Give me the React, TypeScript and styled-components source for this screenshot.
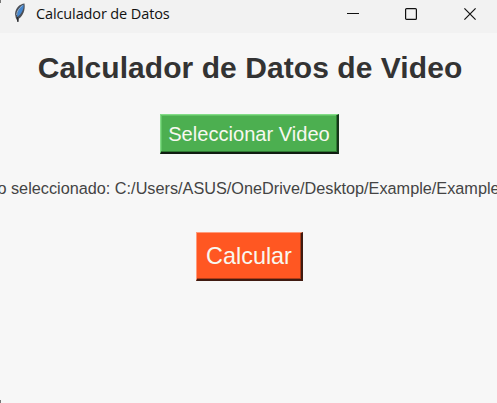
import React from "react";
import styled, { createGlobalStyle } from "styled-components";

const GlobalStyle = createGlobalStyle`
  body { margin: 0; background: #f7f7f7; overflow: hidden; }
`;

const Window = styled.div`
  position: relative;
  display: flex;
  flex-direction: column;
  height: 403px;
  background: #f7f7f7;
  font-family: "Liberation Sans", Arial, sans-serif;
`;

const WindowCorner = styled.i<{ $edge: "top" | "bottom" }>`
  position: absolute;
  left: 0;
  ${({ $edge }) => $edge}: 0;
  width: 1px;
  height: 3px;
  background: #777;
`;

const TitleBar = styled.header`
  display: flex;
  align-items: flex-start;
  height: 33px;
  flex: none;
  box-sizing: border-box;
  padding-left: 13px;
  background: #f2f2f2;
`;

const Feather = styled.svg`
  width: 13px;
  height: 20px;
  margin-top: 3px;
  flex: none;
`;

const Caption = styled.span`
  margin-left: 10px;
  font: 14.5px/28px "Open Sans", "Noto Sans", sans-serif;
  letter-spacing: -0.12px;
  color: #111;
  white-space: nowrap;
`;

const WindowControls = styled.div`
  display: flex;
  margin-left: auto;
  margin-right: -2px;
`;

const ControlButton = styled.button`
  display: flex;
  justify-content: center;
  width: 58.5px;
  height: 28px;
  padding: 8px 0 0;
  border: 0;
  background: none;
  color: #111;
`;

const Content = styled.main`
  display: flex;
  flex-direction: column;
  align-items: center;
`;

const Heading = styled.h1`
  margin: 18px 0 0 3px;
  font-size: 30px;
  letter-spacing: 0.06px;
  line-height: 34px;
  font-weight: bold;
  color: #333;
  white-space: nowrap;
`;

const TkButton = styled.button<{ $tone: "green" | "orange" }>`
  box-sizing: border-box;
  flex: none;
  padding: 0;
  font-family: inherit;
  color: #f8f8f0;
  white-space: nowrap;
  border-style: solid;
  border-width: 1px 2px 2px 1px;
  ${({ $tone }) =>
    $tone === "green"
      ? `
    width: 179px; height: 40px; margin: 29px 0 0 2px; padding-top: 2px;
    font-size: 20.1px; line-height: 35px;
    background: #4caf50; border-color: #83dc87 #16351a #101c11 #83dc87;
    box-shadow: inset -1px -1px #2f7a33, inset 1px 1px #62c466;`
      : `
    width: 107px; height: 49px; margin: 34px 0 0 2px;
    font-size: 23.4px; line-height: 46px;
    background: #ff5722; border-color: #ff9c7c #401b11 #401b11 #ff9c7c;
    box-shadow: inset -1px -1px #b23c17;`}
`;

const SelectedFile = styled.p`
  margin: 24px 0 0;
  width: 497px;
  display: flex;
  justify-content: center;
  overflow: hidden;
  font-size: 16.25px;
  line-height: 20px;
  color: #444;
  white-space: nowrap;
`;

export default function App() {
  return (
    <Window>
      <GlobalStyle />
      <WindowCorner $edge="top" />
      <WindowCorner $edge="bottom" />
      <TitleBar>
        <Feather viewBox="0 0 13 20">
          <path d="M11.5 .5 C7 .8 2.5 5 2 11 L2.8 15 L5 19 L6 15.5 C10 13 12.5 7 11.5 .5Z" fill="#4b4e55" />
          <path d="M10.6 1.6 C6.5 4 4 8 4 14 C8.2 12 11.2 6 10.6 1.6Z" fill="#4485cd" />
          <path d="M9.6 2.4 C6 5 4 8 3.6 12" fill="none" stroke="#a8c4de" strokeWidth=".8" />
          <path d="M4.3 14 L5 18.8" stroke="#292a2d" strokeWidth="1.3" />
        </Feather>
        <Caption>Calculador de Datos</Caption>
        <WindowControls>
          <ControlButton aria-label="Minimizar">
            <svg width="12" height="12"><path d="M0 5.5H12" stroke="currentColor" /></svg>
          </ControlButton>
          <ControlButton aria-label="Maximizar">
            <svg width="12" height="12"><rect x=".6" y=".6" width="10.8" height="10.8" rx="1" fill="none" stroke="currentColor" strokeWidth="1.2" /></svg>
          </ControlButton>
          <ControlButton aria-label="Cerrar">
            <svg width="12" height="12"><path d="M.4.4L11.6 11.6M11.6.4L.4 11.6" stroke="currentColor" strokeWidth="1.2" /></svg>
          </ControlButton>
        </WindowControls>
      </TitleBar>
      <Content>
        <Heading>Calculador de Datos de Video</Heading>
        <TkButton $tone="green">Seleccionar Video</TkButton>
        <SelectedFile>
          <span>o seleccionado: C:/Users/ASUS/OneDrive/Desktop/Example/Example</span>
        </SelectedFile>
        <TkButton $tone="orange">Calcular</TkButton>
      </Content>
    </Window>
  );
}
